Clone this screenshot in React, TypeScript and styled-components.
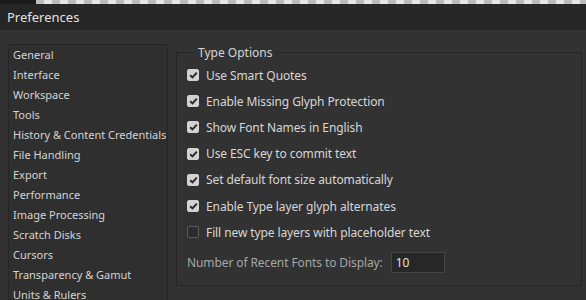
import React from 'react'
import styled, { createGlobalStyle } from 'styled-components'

const GlobalStyle = createGlobalStyle`
  html, body {
    margin: 0;
    padding: 0;
    background: #323232;
    overflow: hidden;
  }
  body {
    font-family: "Noto Sans", "Open Sans", sans-serif;
    font-size: 12px;
    color: #d6d6d6;
  }
`

const Window = styled.div`
  width: 586px;
  height: 300px;
  display: flex;
  flex-direction: column;
  background: #323232;
  overflow: hidden;
`

const TopStrip = styled.div`
  display: flex;
  height: 4px;
`

const StripDark = styled.div`
  width: 36px;
  background: #1a1a1a;
`

const Checker = styled.div`
  flex: 1;
  background: repeating-conic-gradient(#e6e6e6 0% 25%, #bdbdbd 0% 50%) 0 0 / 16px 16px;
`

const TitleBar = styled.div`
  height: 26px;
  display: flex;
  align-items: center;
  padding-left: 7px;
  background: #262626;
  color: #e2e2e2;
  font-size: 13px;
`

const Body = styled.div`
  flex: 1;
  display: flex;
  align-items: flex-start;
  gap: 8px;
  padding: 14px 4px 0 8px;
  min-height: 0;
  overflow: hidden;
`

const CategoryList = styled.ul`
  list-style: none;
  margin: 0;
  padding: 0 4px;
  width: 150px;
  align-self: stretch;
  overflow: hidden;
  border: 1px solid #262626;
  border-bottom: none;
  background: #2f2f2f;
  flex-shrink: 0;
`

const Category = styled.li`
  height: 20px;
  line-height: 20px;
  font-size: 11px;
  white-space: nowrap;
  color: #d4d4d4;
`

const Group = styled.fieldset`
  flex: 1;
  margin: 0;
  padding: 1px 10px 8px;
  border: 1px solid #262626;
  min-width: 0;
`

const Legend = styled.legend`
  margin-left: 7px;
  padding: 0 4px;
  font-size: 12px;
  color: #d6d6d6;
`

const Row = styled.label`
  display: flex;
  align-items: center;
  gap: 7px;
  height: 26.2px;
  white-space: nowrap;
  letter-spacing: -0.1px;
`

const Box = styled.span<{ $checked: boolean }>`
  width: 12px;
  height: 12px;
  box-sizing: border-box;
  border-radius: 2px;
  display: flex;
  align-items: center;
  justify-content: center;
  background: ${p => (p.$checked ? '#d2d2d2' : '#2c2c2c')};
  border: 1px solid ${p => (p.$checked ? '#d2d2d2' : '#5a5a5a')};
`

const FieldRow = styled.div`
  display: flex;
  align-items: center;
  gap: 8px;
  height: 30px;
  margin-top: 2px;
  color: #a6a6a6;
  white-space: nowrap;
  letter-spacing: -0.1px;
`

const NumberInput = styled.input`
  width: 54px;
  height: 21px;
  box-sizing: border-box;
  padding: 0 4px;
  border: 1px solid #444;
  background: #272727;
  color: #e0e0e0;
  font: inherit;
  outline: none;
`

const categories = [
  'General',
  'Interface',
  'Workspace',
  'Tools',
  'History & Content Credentials',
  'File Handling',
  'Export',
  'Performance',
  'Image Processing',
  'Scratch Disks',
  'Cursors',
  'Transparency & Gamut',
  'Units & Rulers',
]

const options = [
  { label: 'Use Smart Quotes', checked: true },
  { label: 'Enable Missing Glyph Protection', checked: true },
  { label: 'Show Font Names in English', checked: true },
  { label: 'Use ESC key to commit text', checked: true },
  { label: 'Set default font size automatically', checked: true },
  { label: 'Enable Type layer glyph alternates', checked: true },
  { label: 'Fill new type layers with placeholder text', checked: false },
]

const Check = ({ checked }: { checked: boolean }) => (
  <Box $checked={checked}>
    {checked && (
      <svg width="9" height="8" viewBox="0 0 9 8">
        <path d="M1.2 4.2 L3.5 6.4 L7.8 1.6" fill="none" stroke="#2a2a2a" strokeWidth="2" />
      </svg>
    )}
  </Box>
)

export default function App() {
  return (
    <Window>
      <GlobalStyle />
      <TopStrip>
        <StripDark />
        <Checker />
      </TopStrip>
      <TitleBar>Preferences</TitleBar>
      <Body>
        <CategoryList>
          {categories.map(c => (
            <Category key={c}>{c}</Category>
          ))}
        </CategoryList>
        <Group>
          <Legend>Type Options</Legend>
          {options.map(o => (
            <Row key={o.label}>
              <Check checked={o.checked} />
              {o.label}
            </Row>
          ))}
          <FieldRow>
            Number of Recent Fonts to Display:
            <NumberInput defaultValue="10" />
          </FieldRow>
        </Group>
      </Body>
    </Window>
  )
}
